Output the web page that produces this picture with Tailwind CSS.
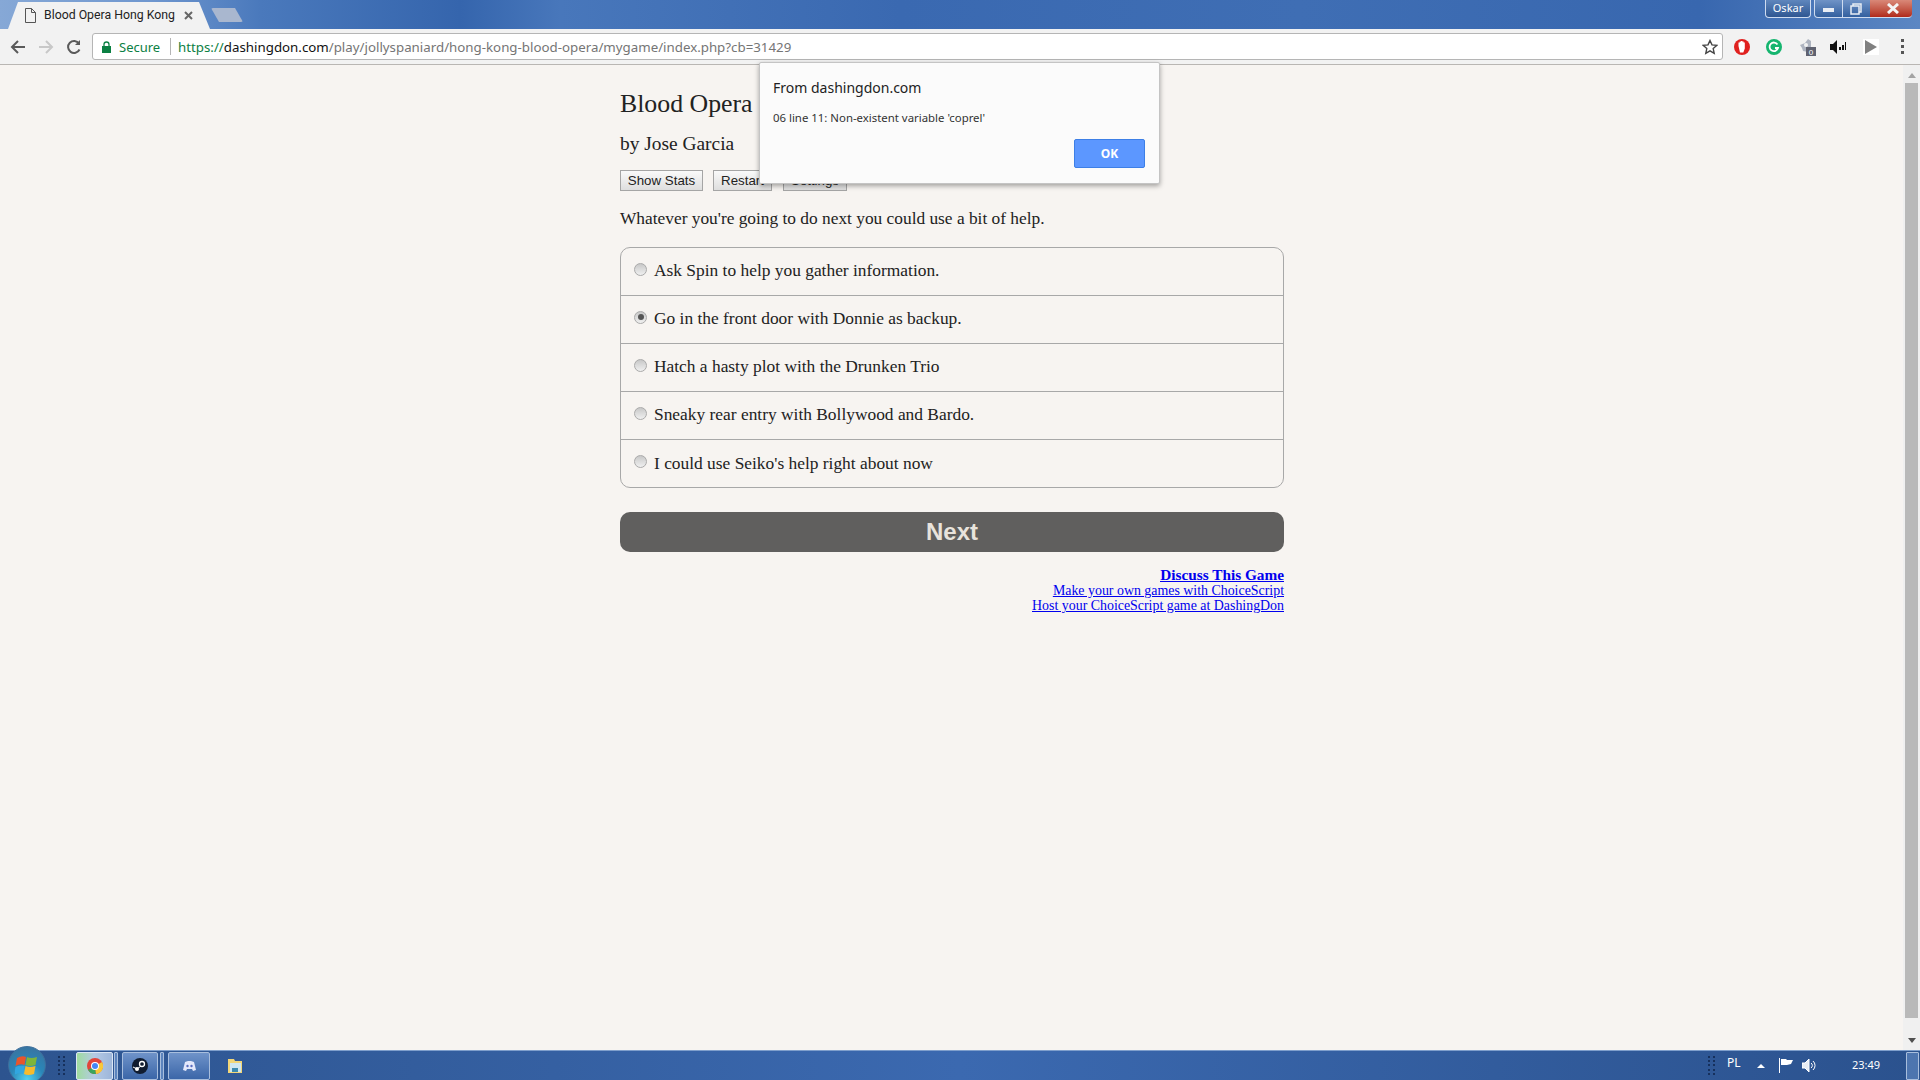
<!DOCTYPE html>
<html lang="en">
<head>
  <meta charset="UTF-8">
  <title>Blood Opera Hong Kong</title>
  <script src="https://cdn.jsdelivr.net/npm/@tailwindcss/browser@4"></script>
</head>
<body class="relative h-screen w-screen overflow-hidden bg-[#f7f4f1] font-['Noto_Sans',sans-serif]">
  <div class="flex h-screen flex-col">

    <!-- title bar -->
    <div class="relative flex h-[29px] shrink-0 items-end bg-[linear-gradient(90deg,#86a8d6_0,#6f97cf_150px,#4a79bc_260px,#3565ad_460px,#4877bb_560px,#3a69b1_900px,#3f6eb4_1300px,#3867af_1700px,#5c87c3_1920px)]">
      <div class="ml-[8px] flex h-[27px] w-[202px] items-center bg-[#f2f2f2] pl-[17px] [clip-path:polygon(10px_0,191px_0,202px_100%,0_100%)]">
        <svg class="h-[15px] w-[11px]" viewBox="0 0 11 15" fill="none" stroke="#555"><path d="M.5.5h6l4 4v10H.5zM6.5.5v4h4"/></svg>
        <span class="ml-[8px] w-[134px] font-['Roboto',sans-serif] text-[12.300px] whitespace-nowrap text-[#222]">Blood Opera Hong Kong</span>
        <svg class="ml-[6px] h-[9px] w-[9px]" viewBox="0 0 9 9" stroke="#666" stroke-width="2"><path d="M1 1l7 7M8 1L1 8"/></svg>
      </div>
      <div class="mb-[7px] ml-[1px] h-[14px] w-[32px] rounded-[2px] bg-[#a9b7cf] [clip-path:polygon(0_0,24px_0,100%_100%,8px_100%)]"></div>

      <div class="absolute top-0 right-[8px] flex h-[18px] items-stretch">
        <div class="mr-[3px] flex w-[46px] items-center justify-center rounded-b-[4px] border border-t-0 border-[#cfdcf0] bg-gradient-to-b from-[#5f86bd] to-[#2f5792] text-[11px] text-white">Oskar</div>
        <div class="flex w-[29px] items-center justify-center rounded-bl-[4px] border border-t-0 border-[#cfdcf0] bg-gradient-to-b from-[#6f93c6] to-[#33609f]"><div class="mt-[3px] h-[4px] w-[11px] bg-[#e8edf4]"></div></div>
        <div class="flex w-[27px] items-center justify-center border-b border-[#cfdcf0] bg-gradient-to-b from-[#6f93c6] to-[#33609f] pr-[2px]">
          <svg class="h-[12px] w-[12px]" viewBox="0 0 12 12" fill="none" stroke="#e8edf4" stroke-width="1.5"><path d="M3 3V1h8v8H9M1 3h8v8H1z"/></svg>
        </div>
        <div class="flex w-[42px] items-center justify-center rounded-br-[4px] border-b border-[#cfdcf0] bg-gradient-to-b from-[#d98878] to-[#b0281a] pl-[4px]">
          <svg class="h-[11px] w-[14px]" viewBox="0 0 14 11" stroke="#f4f4f4" stroke-width="3"><path d="M2 1l10 9M12 1L2 10"/></svg>
        </div>
      </div>
    </div>

    <!-- toolbar -->
    <div class="flex h-[36px] shrink-0 items-center border-b border-[#b9b6b3] bg-[#f2f2f2]">
      <div class="flex w-[92px] items-center pl-[10px]">
        <svg class="h-[16px] w-[16px]" viewBox="0 0 16 16" fill="none" stroke="#5a5a5a" stroke-width="2"><path d="M15 8H2M8 2L2 8l6 6"/></svg>
        <svg class="ml-[12px] h-[16px] w-[16px]" viewBox="0 0 16 16" fill="none" stroke="#c8c8c8" stroke-width="2"><path d="M1 8h13M8 2l6 6-6 6"/></svg>
        <svg class="ml-[12px] h-[16px] w-[16px]" viewBox="0 0 16 16" fill="none" stroke="#5a5a5a" stroke-width="2"><path d="M13.5 10.5A6 6 0 1 1 13 4.5"/><path d="M14 1v5H9" fill="#5a5a5a" stroke="none"/></svg>
      </div>
      <div class="flex h-[27px] w-[1631px] items-center rounded-[3px] border border-[#b5b5b5] bg-white text-[13px]">
        <svg class="ml-[9px] h-[12px] w-[9px]" viewBox="0 0 9 12"><path d="M2 5V3.500a2.500 2.500 0 0 1 5 0V5" fill="none" stroke="#0b8043" stroke-width="1.300"/><path d="M0 5h9v7H0z" fill="#0b8043"/></svg>
        <span class="mt-[2px] ml-[8px] w-[42px] text-[#0b8043]">Secure</span>
        <span class="ml-[9px] h-[17px] w-px bg-[#b5b5b5]"></span>
        <span class="mt-[2px] ml-[7px] text-[13.300px] whitespace-nowrap text-[#757575]"><span class="text-[#0b8043]">https://</span><span class="text-[#111]">dashingdon.com</span>/play/jollyspaniard/hong-kong-blood-opera/mygame/index.php?cb=31429</span>
        <svg class="mr-[4px] ml-auto h-[16px] w-[16px]" viewBox="0 0 16 16" fill="none" stroke="#444" stroke-width="1.400"><path d="M8 1.500l2 4.400 4.700.5-3.500 3.200 1 4.700L8 11.900l-4.200 2.400 1-4.700L1.300 6.400 6 5.900z"/></svg>
      </div>
      <div class="flex flex-1 items-center">
        <svg class="ml-[11px] h-[16px] w-[16px]" viewBox="0 0 16 16"><ellipse cx="8" cy="8" rx="8" ry="8" fill="#e0211f"/><path d="M4.500 7V3.500h1.200V2.500h1.300v-.5h1.300v.5h1.300v1h1.200v6l-1.500 4H6z" fill="#fff"/></svg>
        <svg class="ml-[16px] h-[16px] w-[16px]" viewBox="0 0 16 16"><circle cx="8" cy="8" r="8" fill="#15b56f"/><path d="M11.500 5.500A4.300 4.300 0 1 0 12 9H9" fill="none" stroke="#fff" stroke-width="1.800"/></svg>
        <svg class="ml-[16px] h-[18px] w-[18px]" viewBox="0 0 18 18"><path d="M2 7l5-2 3-4 3 2v6l-3 5-5-1-1-3z" fill="#aeb4c0"/><circle cx="8" cy="7" r="2" fill="#f2f2f2"/><path d="M8 9h10v9H8z" fill="#5f6270"/><text x="13" y="16.500" text-anchor="middle" font-size="8" fill="#fff" font-family="Liberation Sans">0</text></svg>
        <svg class="ml-[14px] h-[14px] w-[16px]" viewBox="0 0 16 14" fill="#111"><path d="M0 4h3l4-4v14l-4-4H0zM9 7h2v3H9zM12 5h2v5h-2zM15 2h1v8h-1z"/></svg>
        <div class="ml-[17px] flex h-[16px] w-[16px] items-center justify-center bg-white"><svg class="h-[14px] w-[12px]" viewBox="0 0 12 14" fill="#808080"><path d="M0 0l12 7-12 7z"/></svg></div>
        <div class="ml-[22px] flex flex-col gap-[3px]"><i class="block h-[3px] w-[3px] bg-[#555]"></i><i class="block h-[3px] w-[3px] bg-[#555]"></i><i class="block h-[3px] w-[3px] bg-[#555]"></i></div>
      </div>
    </div>

    <!-- page -->
    <div class="flex min-h-0 flex-1">
      <div class="flex-1 pl-[620px] font-['Liberation_Serif',serif] text-[#222]">
        <div class="w-[664px]">
          <h1 class="mt-[24px] h-[30px] text-[25.800px] leading-[30px] font-normal">Blood Opera</h1>
          <p class="mt-[10px] h-[30px] text-[19.400px] leading-[30px]">by Jose Garcia</p>
          <div class="mt-[11px] flex font-['Liberation_Sans',sans-serif] text-[13.300px] leading-none">
            <button class="h-[21px] w-[83px] border border-[#a5a5a5] bg-gradient-to-b from-[#fafafa] to-[#dedede]">Show Stats</button>
            <button class="ml-[10px] h-[21px] w-[59px] border border-[#a5a5a5] bg-gradient-to-b from-[#fafafa] to-[#dedede]">Restart</button>
            <button class="ml-[11px] h-[21px] w-[64px] border border-[#a5a5a5] bg-gradient-to-b from-[#fafafa] to-[#dedede]">Settings</button>
          </div>
          <p class="mt-[17px] h-[22px] text-[17.350px] leading-[22px]">Whatever you're going to do next you could use a bit of help.</p>
          <div class="mt-[17px] rounded-[10px] border border-[#a8a8a8] text-[17.400px]">
            <label class="flex h-[48px] items-center border-b border-[#a8a8a8] pb-[2px] pl-[13px]"><span class="mb-[3px] h-[13px] w-[13px] rounded-full border border-[#aaa] bg-gradient-to-b from-[#c8c8c8] to-[#f0f0f0]"></span><span class="ml-[7px]">Ask Spin to help you gather information.</span></label>
            <label class="flex h-[48px] items-center border-b border-[#a8a8a8] pb-[2px] pl-[13px]"><span class="mb-[3px] flex h-[13px] w-[13px] items-center justify-center rounded-full border border-[#aaa] bg-gradient-to-b from-[#c8c8c8] to-[#f0f0f0]"><i class="block h-[6px] w-[6px] rounded-full bg-[#555]"></i></span><span class="ml-[7px]">Go in the front door with Donnie as backup.</span></label>
            <label class="flex h-[48px] items-center border-b border-[#a8a8a8] pb-[2px] pl-[13px]"><span class="mb-[3px] h-[13px] w-[13px] rounded-full border border-[#aaa] bg-gradient-to-b from-[#c8c8c8] to-[#f0f0f0]"></span><span class="ml-[7px]">Hatch a hasty plot with the Drunken Trio</span></label>
            <label class="flex h-[48px] items-center border-b border-[#a8a8a8] pb-[2px] pl-[13px]"><span class="mb-[3px] h-[13px] w-[13px] rounded-full border border-[#aaa] bg-gradient-to-b from-[#c8c8c8] to-[#f0f0f0]"></span><span class="ml-[7px]">Sneaky rear entry with Bollywood and Bardo.</span></label>
            <label class="flex h-[47px] items-center pb-[1px] pl-[13px]"><span class="mb-[3px] h-[13px] w-[13px] rounded-full border border-[#aaa] bg-gradient-to-b from-[#c8c8c8] to-[#f0f0f0]"></span><span class="ml-[7px]">I could use Seiko's help right about now</span></label>
          </div>
          <button class="mt-[24px] h-[40px] w-full rounded-[10px] bg-[#605f5e] font-['Liberation_Sans',sans-serif] text-[24px] font-bold text-[#e8e3dc]">Next</button>
          <div class="mt-[15px] text-right text-[13.900px] leading-[15px] text-[#0000ee] underline">
            <a class="block text-[15.300px] font-bold" href="#">Discuss This Game</a>
            <a class="mt-px block" href="#">Make your own games with ChoiceScript</a>
            <a class="block" href="#">Host your ChoiceScript game at DashingDon</a>
          </div>
        </div>
      </div>
      <!-- scrollbar -->
      <div class="flex w-[17px] flex-col items-center bg-[#f0f0f0]">
        <div class="mt-[8px] h-0 w-0 border-x-[4px] border-b-[5px] border-x-transparent border-b-[#a3a3a3]"></div>
        <div class="mt-[5px] h-[935px] w-[13px] bg-[#b9b9b9]"></div>
        <div class="mt-auto mb-[7px] h-0 w-0 border-x-[4px] border-t-[5px] border-x-transparent border-t-[#505050]"></div>
      </div>
    </div>

    <!-- taskbar -->
    <div class="relative flex h-[30px] shrink-0 items-center border-t border-[#7f9fcc] bg-gradient-to-r from-[#2d548f] via-[#3b69b0] to-[#2b528e] text-white">
      <div class="absolute top-[-5px] left-[8px] flex h-[38px] w-[38px] items-center justify-center rounded-full border border-[#3f6f9c] bg-[radial-gradient(circle_at_50%_90%,#4fd0f0_0,#2a86b8_45%,#3d6f9a_100%)]">
        <svg class="h-[24px] w-[24px]" viewBox="0 0 24 24"><path d="M2 5q5-3 9-1l-1.500 8q-4-2-9 1z" fill="#e8552c"/><path d="M12 4q4 2 10 0l-1.500 8q-6 2-10 0z" fill="#7fb53a"/><path d="M.5 14q4-2 9-1l-1.500 8q-4-2-9 1z" fill="#31a6e0"/><path d="M10.500 13q4 2 10 0l-1.500 8q-6 2-10 0z" fill="#f6bb2c"/></svg>
      </div>
      <div class="ml-[58px] grid h-[20px] w-[8px] grid-cols-2 gap-[2px]">
        <i class="h-[2px] w-[2px] bg-[#16305c]"></i><i class="h-[2px] w-[2px] bg-[#16305c]"></i><i class="h-[2px] w-[2px] bg-[#16305c]"></i><i class="h-[2px] w-[2px] bg-[#16305c]"></i><i class="h-[2px] w-[2px] bg-[#16305c]"></i><i class="h-[2px] w-[2px] bg-[#16305c]"></i><i class="h-[2px] w-[2px] bg-[#16305c]"></i><i class="h-[2px] w-[2px] bg-[#16305c]"></i><i class="h-[2px] w-[2px] bg-[#16305c]"></i><i class="h-[2px] w-[2px] bg-[#16305c]"></i>
      </div>
      <div class="ml-[10px] flex h-[28px] w-[37px] items-center justify-center rounded-[2px] border border-[#dbe6f4] bg-gradient-to-r from-[#9fdc9d] via-[#b4c9e4] to-[#9db6da]">
        <svg class="h-[16px] w-[16px]" viewBox="0 0 16 16"><circle cx="8" cy="8" r="8" fill="#e2453a"/><path d="M8 8L1 12a8 8 0 0 0 8 4z" fill="#3ba55c"/><path d="M8 8l1 8a8 8 0 0 0 6-12z" fill="#f7c83a"/><circle cx="8" cy="8" r="4" fill="#fff"/><circle cx="8" cy="8" r="3" fill="#4486f4"/></svg>
      </div>
      <div class="ml-[1px] h-[28px] w-[4px] rounded-[1px] border border-[#a8bedd] bg-[#5c84bd]"></div>
      <div class="ml-[4px] flex h-[28px] w-[36px] items-center justify-center rounded-[2px] border border-[#a8bedd] bg-gradient-to-b from-[#6f93c9] to-[#3b66a8]">
        <svg class="h-[16px] w-[16px]" viewBox="0 0 16 16"><circle cx="8" cy="8" r="8" fill="#101c30"/><circle cx="10" cy="6" r="2.500" fill="none" stroke="#fff" stroke-width="1.300"/><circle cx="5" cy="11" r="2" fill="#fff"/><path d="M1 9l4 2 4-3" stroke="#fff" fill="none"/></svg>
      </div>
      <div class="ml-[2px] h-[28px] w-[4px] rounded-[1px] border border-[#a8bedd] bg-[#5c84bd]"></div>
      <div class="ml-[4px] flex h-[28px] w-[42px] items-center justify-center rounded-[2px] border border-[#a8bedd] bg-gradient-to-b from-[#6f93c9] to-[#3b66a8]">
        <svg class="h-[10px] w-[13px]" viewBox="0 0 13 10"><path d="M2 1l3-1h3l3 1 2 8-3 1-1-2H4L3 10 0 9z" fill="#e4e8fb"/><circle cx="4.500" cy="5" r="1.200" fill="#5b6dc0"/><circle cx="8.500" cy="5" r="1.200" fill="#5b6dc0"/></svg>
      </div>
      <svg class="ml-[17px] h-[16px] w-[16px]" viewBox="0 0 16 16"><path d="M1 1h6l1 2h7v12H1z" fill="#f2d678"/><path d="M3 5h11v9H3z" fill="#cfe7f2"/><path d="M5 10h6v4H5z" fill="#3c8ab0"/></svg>

      <div class="ml-auto flex items-center">
        <div class="grid h-[20px] w-[8px] grid-cols-2 gap-[2px]">
          <i class="h-[2px] w-[2px] bg-[#16305c]"></i><i class="h-[2px] w-[2px] bg-[#16305c]"></i><i class="h-[2px] w-[2px] bg-[#16305c]"></i><i class="h-[2px] w-[2px] bg-[#16305c]"></i><i class="h-[2px] w-[2px] bg-[#16305c]"></i><i class="h-[2px] w-[2px] bg-[#16305c]"></i><i class="h-[2px] w-[2px] bg-[#16305c]"></i><i class="h-[2px] w-[2px] bg-[#16305c]"></i><i class="h-[2px] w-[2px] bg-[#16305c]"></i><i class="h-[2px] w-[2px] bg-[#16305c]"></i>
        </div>
        <span class="mb-[5px] ml-[11px] w-[14px] text-[12px]">PL</span>
        <div class="ml-[16px] h-0 w-0 border-x-[4px] border-b-[4px] border-x-transparent border-b-white"></div>
        <svg class="ml-[14px] h-[15px] w-[15px]" viewBox="0 0 15 15" fill="#fff"><path d="M0 0h1v15H0zM2 1h5l1 1h6l-2 4-4 1H2z"/></svg>
        <svg class="ml-[8px] h-[15px] w-[16px]" viewBox="0 0 16 15" fill="none" stroke="#fff"><path d="M0 5h3l4-4v13l-4-4H0z" fill="#e8edf4"/><path d="M9 5a3 3 0 0 1 0 5M11 3a6 6 0 0 1 0 9"/></svg>
        <span class="ml-[34px] w-[28px] text-[11px] whitespace-nowrap">23:49</span>
        <div class="mr-px ml-[26px] h-[28px] w-[13px] rounded-[1px] border border-[#a8bedd] bg-[#5c84bd]/70"></div>
      </div>
    </div>
  </div>

  <!-- alert dialog -->
  <div class="absolute top-[62px] left-[759px] h-[122px] w-[401px] rounded-[2px] border border-[#c4c4c4] bg-[#fbfbfb] shadow-[0_2px_5px_rgba(0,0,0,0.35)]">
    <p class="absolute top-[15px] left-[13px] text-[14px] leading-[20px] text-[#222]">From dashingdon.com</p>
    <p class="absolute top-[47px] left-[13px] text-[11.400px] leading-[16px] text-[#333]">06 line 11: Non-existent variable 'coprel'</p>
    <button class="absolute top-[76px] left-[314px] h-[29px] w-[71px] rounded-[2px] border border-[#3d7fe6] bg-[#5c97ff] text-[12px] font-bold text-white">OK</button>
  </div>
</body>
</html>
